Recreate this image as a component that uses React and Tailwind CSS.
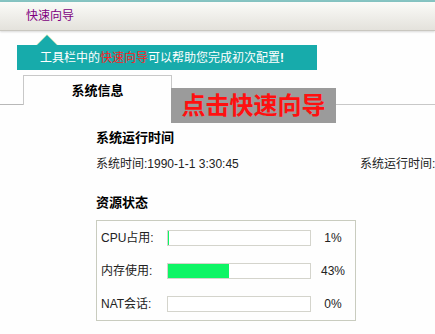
import React from 'react';

const rows = [
    { label: 'CPU占用:', value: 1 },
    { label: '内存使用:', value: 43 },
    { label: 'NAT会话:', value: 0 },
];

function UsageRow({ label, value }) {
    return (
        <div className="flex items-center h-[33px]">
            <span className="w-[70px] pl-[4px] text-[12px] text-[#222]">{label}</span>
            <div className="w-[144px] h-[16px] border border-[#d4d4cc] bg-white">
                <div className="h-full bg-[#0ef565]" style={{ width: `${value}%` }} />
            </div>
            <span className="w-[44px] text-center text-[12px] text-[#222]">{value}%</span>
        </div>
    );
}

export default function App() {
    return (
        <div
            className="relative w-[435px] h-[334px] overflow-hidden bg-[#fefefe]"
            style={{ fontFamily: '"Liberation Sans", "Noto Sans CJK SC", sans-serif' }}
        >
            {/* top bar */}
            <div className="h-[2px] bg-[#86c4c2]" />
            <div className="h-[29px] flex items-center pl-[26px] bg-gradient-to-b from-[#fbfbf8] to-[#e4e2dc] border-b border-[#c9c7c0] shadow-[0_1px_2px_rgba(0,0,0,0.15)]">
                <span className="text-[12px] text-[#800080]">快速向导</span>
            </div>

            {/* tooltip */}
            <div className="relative mt-[14px] ml-[17px] w-[300px] h-[25px] bg-[#17abab] flex items-center pl-[23px] text-[12px] text-white">
                <div className="absolute left-[19px] -top-[11px] w-0 h-0 border-l-[11px] border-r-[11px] border-b-[11px] border-l-transparent border-r-transparent border-b-[#f3f0c8]" />
                <div className="absolute left-[20px] -top-[10px] w-0 h-0 border-l-[10px] border-r-[10px] border-b-[10px] border-l-transparent border-r-transparent border-b-[#17abab]" />
                <span>工具栏中的</span>
                <span className="text-[#ff2020]">快速向导</span>
                <span>可以帮助您完成初次配置</span>
                <span className="font-bold">!</span>
            </div>

            {/* tabs */}
            <div className="flex mt-[5px] h-[30px]">
                <div className="w-[23px] border-b border-[#b8b8b8]" />
                <div className="w-[149px] border border-b-0 border-[#c8c8c8] flex items-center justify-center text-[13px] font-bold text-black">
                    系统信息
                </div>
                <div className="flex-1 border-b border-[#c8c8c8]" />
            </div>

            {/* overlay hint */}
            <div className="absolute left-[171px] top-[88px] w-[165px] h-[35px] bg-[#9b9b9b] flex items-center justify-center">
                <span className="text-[24px] font-bold text-[#ff1010] leading-none">点击快速向导</span>
            </div>

            {/* content */}
            <div className="pl-[96px] pt-[25px] w-[600px]">
                <div className="text-[13px] font-bold text-black leading-[16px]">系统运行时间</div>
                <div className="flex mt-[10px] text-[12px] text-[#222] leading-[16px]">
                    <span className="w-[264px]">系统时间:1990-1-1 3:30:45</span>
                    <span>系统运行时间:1天</span>
                </div>

                <div className="mt-[23px] text-[13px] font-bold text-black leading-[16px]">资源状态</div>
                <div className="mt-[9px] w-[260px] h-[101px] border border-[#c9ccbf]">
                    {rows.map((r) => (
                        <UsageRow key={r.label} label={r.label} value={r.value} />
                    ))}
                </div>
            </div>
        </div>
    );
}
